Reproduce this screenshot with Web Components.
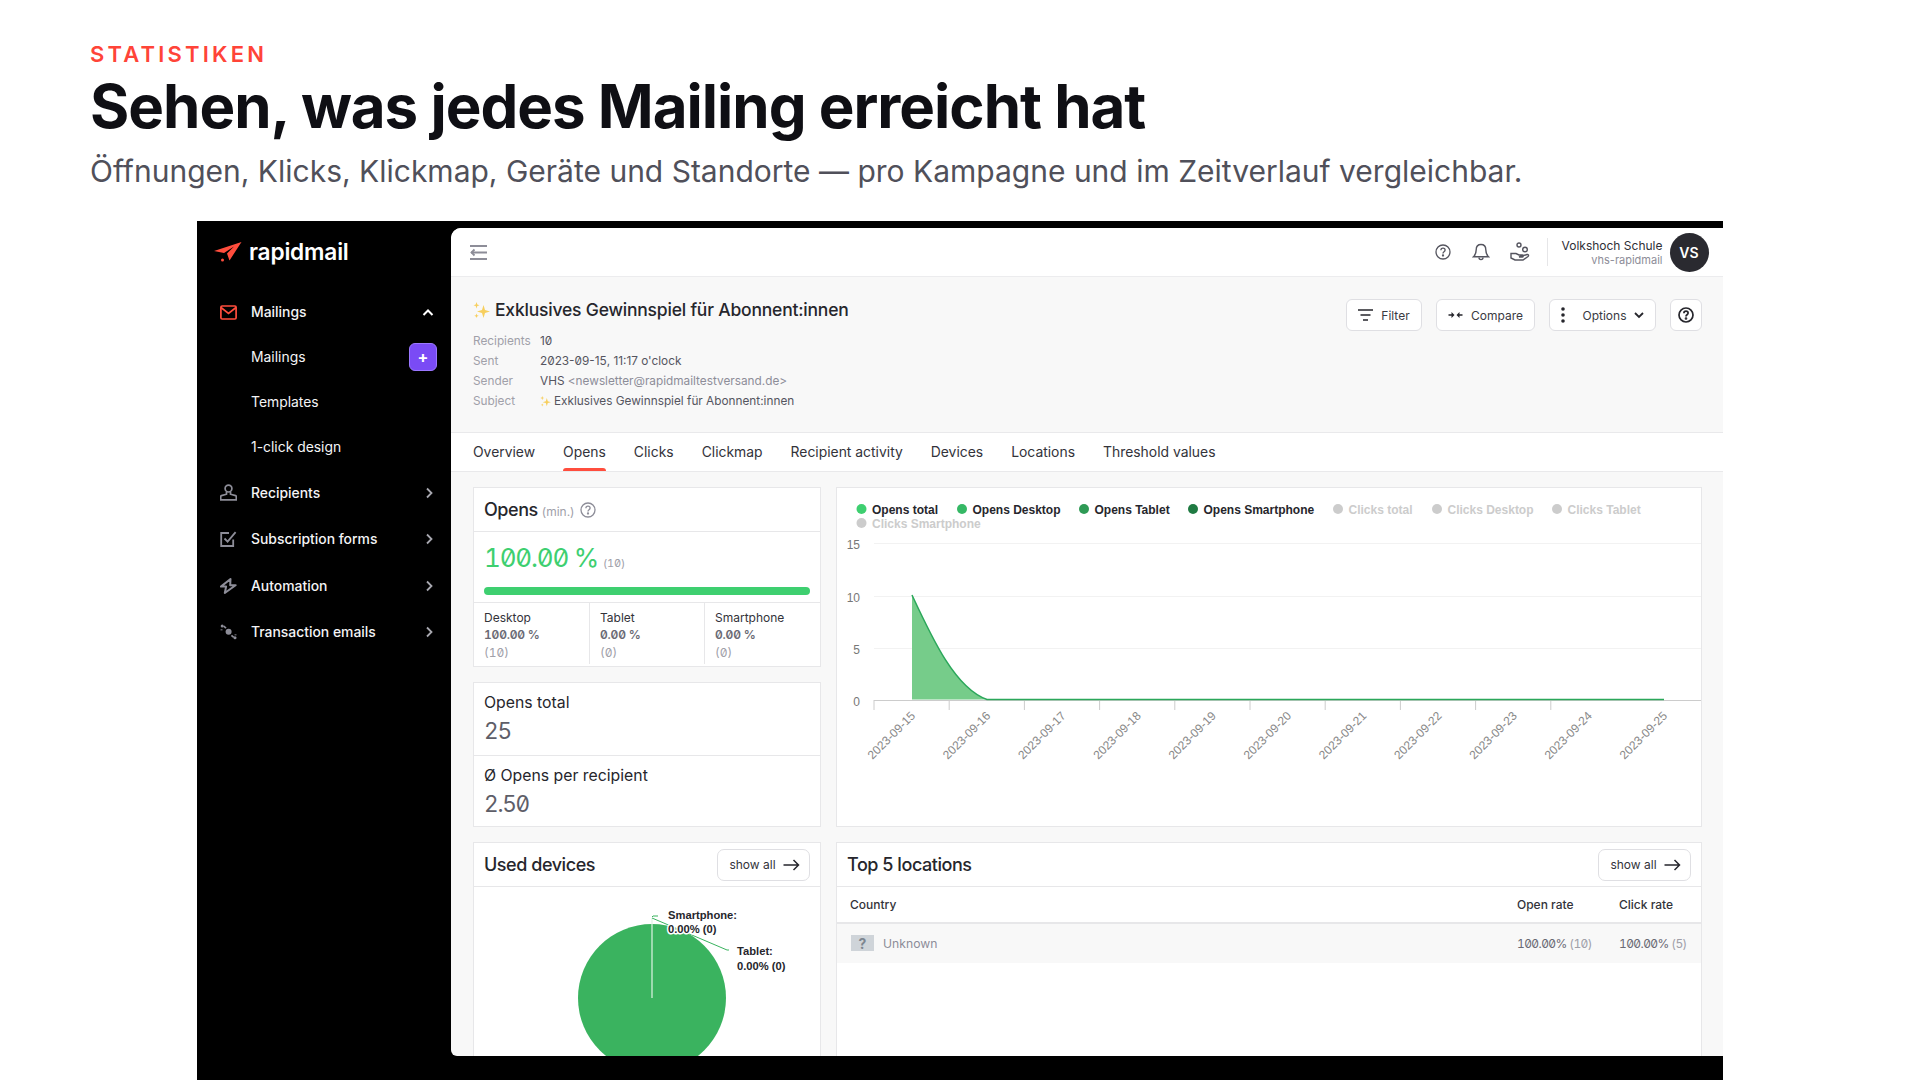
<!DOCTYPE html>
<html lang="de">
<head>
<meta charset="utf-8">
<title>Statistiken</title>
<style>
  html, body { margin: 0; height: 1080px; overflow: hidden; background: #fff; }
  body { font-family: Inter, "Noto Sans", sans-serif; color: #26262c; }
</style>
</head>
<body>
<stats-hero></stats-hero>
<app-frame></app-frame>

<script>
const ICONS = {
  mail: '<svg width="17" height="15" viewBox="0 0 17 15" fill="none" stroke="#ff4d3d" stroke-width="1.7"><rect x=".9" y="1" width="15.2" height="13" rx="1.2"/><path d="M1 2.5 8.5 8.5 16 2.5"/></svg>',
  person: '<svg width="17" height="17" viewBox="0 0 17 17" fill="none" stroke="#8d8d98" stroke-width="1.7"><circle cx="8.5" cy="4.6" r="3.4"/><path d="M6.5 8v2.2L1.4 11.6c-.5.2-.7.5-.7 1v3.2h15.6v-3.2c0-.5-.2-.8-.7-1l-5.1-1.4V8"/></svg>',
  check: '<svg width="17" height="16" viewBox="0 0 17 16" fill="none" stroke="#8d8d98" stroke-width="1.8"><path d="M9 2H1.2v13h12V8.5"/><path d="M4.5 7.5 7.6 10.6 15.6 1.2"/></svg>',
  bolt: '<svg width="17" height="16" viewBox="0 0 17 16" fill="none" stroke="#8d8d98" stroke-width="2" stroke-linejoin="round"><path d="M10.5 1 .9 8.6h5.2L4.8 15l10.8-7.8h-5.4z"/></svg>',
  swap: '<svg width="17" height="16" viewBox="0 0 17 16" fill="#8d8d98"><circle cx="8.6" cy="7.8" r="3"/><circle cx="2.2" cy="2" r="1.5"/><path d="M4.2 1.4 6.6 3.6 5.4 4.8 3 2.6z"/><circle cx="15" cy="13.8" r="1.5"/><path d="M12 10.8l2.4 2-1.2 1.3-2.4-2z"/><path d="M.5 5h2v1.5h-2zM14.5 10h2v1.4h-2z" opacity=".6"/></svg>',
  help: '<svg width="16" height="16" viewBox="0 0 16 16" fill="none" stroke="currentColor" stroke-width="1.3"><circle cx="8" cy="8" r="7"/><path d="M5.9 6.2c0-1.2.9-2 2.1-2s2.1.8 2.1 1.9c0 1.7-2.1 1.6-2.1 3.3"/><circle cx="8" cy="11.5" r=".5" fill="currentColor"/></svg>',
  arrow: '<svg width="17" height="12" viewBox="0 0 17 12" fill="none" stroke="#26262c" stroke-width="1.5"><path d="M.5 6h15M10.5 1l5 5-5 5"/></svg>',
  sparkle: '<svg width="17" height="17" viewBox="0 0 17 17" fill="#f7cf5e"><path d="M10.5 3 12 8l5 1.5L12 11l-1.5 5L9 11 4 9.5 9 8z"/><path d="M3.5 0l.8 2.4 2.2.8-2.2.8L3.5 6.4l-.8-2.4L.5 3.2l2.2-.8z"/><path d="M3.5 11.5l.6 1.7 1.6.6-1.6.6-.6 1.7-.6-1.7-1.6-.6 1.6-.6z"/></svg>'
};

class StatsHero extends HTMLElement {
  connectedCallback() {
    this.attachShadow({ mode: 'open' }).innerHTML = `
      <style>
        :host { display: block; height: 221px; box-sizing: border-box; padding: 41px 0 0 90px; }
        .eyebrow { font-size: 22px; line-height: 27px; font-weight: 600; letter-spacing: .145em; color: #ff4438; }
        h1 { margin: 2px 0 0; font-size: 60px; line-height: 72px; font-weight: 700; letter-spacing: -1px; color: #0f0f14; }
        p { margin: 10px 0 0; font-size: 30px; line-height: 38px; color: #50505a; }
      </style>
      <div class="eyebrow">STATISTIKEN</div>
      <h1>Sehen, was jedes Mailing erreicht hat</h1>
      <p>Öffnungen, Klicks, Klickmap, Geräte und Standorte — pro Kampagne und im Zeitverlauf vergleichbar.</p>`;
  }
}

class AppFrame extends HTMLElement {
  connectedCallback() {
    this.attachShadow({ mode: 'open' }).innerHTML = `
      <style>
        :host { display: flex; margin-left: 197px; width: 1526px; height: 859px; background: #000; box-sizing: border-box; padding: 7px 0 24px; }
        main { flex: 1; min-width: 0; background: #f8f8f8; border-radius: 10px 0 0 6px; overflow: hidden; }
        .content { padding: 15px 21px 0 22px; display: grid; grid-template-columns: 348px 866px; column-gap: 15px; row-gap: 15px; grid-template-rows: 340px auto; }
        .left { display: flex; flex-direction: column; gap: 15px; }
      </style>
      <side-bar></side-bar>
      <main>
        <top-bar></top-bar>
        <campaign-head></campaign-head>
        <tab-row></tab-row>
        <div class="content">
          <div class="left"><opens-card></opens-card><totals-card></totals-card></div>
          <opens-chart></opens-chart>
          <devices-card></devices-card>
          <locations-card></locations-card>
        </div>
      </main>`;
  }
}

class SideBar extends HTMLElement {
  connectedCallback() {
    const chev = '<svg slot="end" width="9" height="12" viewBox="0 0 9 12" fill="none" stroke="#a8a8b0" stroke-width="1.8"><path d="M2 1.5 6.5 6 2 10.5"/></svg>';
    this.attachShadow({ mode: 'open' }).innerHTML = `
      <style>
        :host { display: block; width: 254px; flex: none; background: #000; color: #fff; }
        .logo { display: flex; align-items: center; gap: 7px; height: 47px; padding-left: 17px; font-size: 22.7px; font-weight: 600; letter-spacing: -.2px; margin-bottom: 15px; }
        nav { display: flex; flex-direction: column; }
      </style>
      <div class="logo">
        <svg width="28" height="20" viewBox="0 0 28 20"><path fill="#ff4d3d" d="M0 9 27.5 0 15.5 18.5 13 11.5 20 4.5 10 11z"/><circle cx="8.5" cy="18" r="1.5" fill="#ff4d3d"/></svg>
        rapidmail
      </div>
      <nav>
        <nav-item strong h="44">${ICONS.mail.replace('<svg', '<svg slot="icon"')}Mailings<svg slot="end" width="12" height="9" viewBox="0 0 12 9" fill="none" stroke="#fff" stroke-width="2"><path d="M1.5 7 6 2.5 10.5 7"/></svg></nav-item>
        <nav-item h="45">Mailings<span slot="end" style="display:flex;align-items:center;justify-content:center;width:28px;height:28px;box-sizing:border-box;margin-right:-3px;border-radius:6px;background:#7a4bf5;border:1px solid #9b78ff;color:#fff;font-size:16px;font-weight:700">+</span></nav-item>
        <nav-item h="45">Templates</nav-item>
        <nav-item h="45">1-click design</nav-item>
        <nav-item strong h="47">${ICONS.person.replace('<svg', '<svg slot="icon"')}Recipients${chev}</nav-item>
        <nav-item strong h="46">${ICONS.check.replace('<svg', '<svg slot="icon"')}Subscription forms${chev}</nav-item>
        <nav-item strong h="47">${ICONS.bolt.replace('<svg', '<svg slot="icon"')}Automation${chev}</nav-item>
        <nav-item strong h="46">${ICONS.swap.replace('<svg', '<svg slot="icon"')}Transaction emails${chev}</nav-item>
      </nav>`;
  }
}

class NavItem extends HTMLElement {
  connectedCallback() {
    const weight = this.hasAttribute('strong') ? 500 : 400;
    this.attachShadow({ mode: 'open' }).innerHTML = `
      <style>
        :host { display: flex; align-items: center; height: ${this.getAttribute('h')}px; padding: 0 17px 0 23px; font-size: 13.9px; font-weight: ${weight}; color: #f4f4f6; }
        .icon { width: 31px; display: flex; flex: none; }
        .label { flex: 1; }
        .end { display: flex; align-items: center; }
      </style>
      <span class="icon"><slot name="icon"></slot></span>
      <span class="label"><slot></slot></span>
      <span class="end"><slot name="end"></slot></span>`;
  }
}

class TopBar extends HTMLElement {
  connectedCallback() {
    this.attachShadow({ mode: 'open' }).innerHTML = `
      <style>
        :host { display: flex; align-items: center; height: 49px; box-sizing: border-box; background: #fff; border-bottom: 1px solid #ececee; padding: 0 14.5px 0 19px; color: #55555f; }
        .spacer { flex: 1; }
        .icons { display: flex; align-items: center; gap: 20px; }
        .icons > svg:first-child { margin-right: 1px; }
        .sep { width: 1px; height: 28px; background: #e6e6e8; margin: 0 14px 0 17px; }
        .who { text-align: right; margin-right: 7px; }
        .name { font-size: 12px; line-height: 15px; color: #2f2f36; }
        .sub { font-size: 11px; line-height: 14px; color: #8d8d98; }
        .avatar { width: 39px; height: 39px; border-radius: 50%; background: #2a2a30; color: #fff; font-size: 14px; font-weight: 600; display: flex; align-items: center; justify-content: center; }
      </style>
      <svg width="17" height="17" viewBox="0 0 17 17" fill="none" stroke="#8d8d98" stroke-width="1.8"><path d="M0 2h17M0 8.5h17M0 15h17"/><path stroke="#fff" stroke-width="4" d="M0 8.5h1"/><path d="M4.5 5.5l-3 3 3 3"/></svg>
      <span class="spacer"></span>
      <span class="icons">
        ${ICONS.help}
        <svg width="18" height="19" viewBox="0 0 18 19" fill="none" stroke="#55555f" stroke-width="1.4"><path d="M9 1.5c-3.2 0-4.8 2.3-4.8 5.2 0 3.7-1.3 5.7-2.7 7.1h15c-1.4-1.4-2.7-3.4-2.7-7.1 0-2.9-1.6-5.2-4.8-5.2z"/><path d="M7 14.5c0 2.8 4 2.8 4 0"/></svg>
        <svg width="20" height="20" viewBox="0 0 20 20" fill="none" stroke="#55555f" stroke-width="1.4"><circle cx="9" cy="3" r="2"/><circle cx="15" cy="7.5" r="2.3"/><path d="M1 11.5h5l3 1.5h3.5c1 0 1 2 0 2H9l8-2.5c1.5-.3 2 1 1 2l-5 3.5H5l-4-2z"/></svg>
      </span>
      <span class="sep"></span>
      <div class="who"><div class="name">Volkshoch Schule</div><div class="sub">vhs-rapidmail</div></div>
      <div class="avatar">VS</div>`;
  }
}

class CampaignHead extends HTMLElement {
  connectedCallback() {
    this.attachShadow({ mode: 'open' }).innerHTML = `
      <style>
        :host { display: flex; height: 156px; box-sizing: border-box; border-bottom: 1px solid #e9e9eb; padding: 22px 21px 0 22px; align-items: flex-start; }
        .info { flex: 1; }
        h2 { display: flex; align-items: center; gap: 5px; margin: 0 0 10px; font-size: 17.5px; line-height: 22px; font-weight: 500; color: #26262c; letter-spacing: -.2px; }
        .meta { display: grid; grid-template-columns: 67px auto; grid-auto-rows: 20px; align-items: center; font-size: 11.8px; color: #a0a0a9; }
        .val { color: #55555f; display: flex; align-items: center; gap: 3px; }
        .num { font-feature-settings: "zero"; }
        .val em { font-style: normal; color: #8d8d98; }
        .actions { display: flex; gap: 14px; }
      </style>
      <div class="info">
        <h2>${ICONS.sparkle}Exklusives Gewinnspiel für Abonnent:innen</h2>
        <div class="meta">
          <span>Recipients</span><span class="val num">10</span>
          <span>Sent</span><span class="val"><span><span class="num">2023-09-15</span>, 11:17 o'clock</span></span>
          <span>Sender</span><span class="val"><span>VHS <em>&lt;newsletter@rapidmailtestversand.de&gt;</em></span></span>
          <span>Subject</span><span class="val">${ICONS.sparkle.replace('width="17" height="17"', 'width="11" height="11"')}Exklusives Gewinnspiel für Abonnent:innen</span>
        </div>
      </div>
      <div class="actions">
        <tool-button w="76"><svg width="15" height="12" viewBox="0 0 15 12" fill="none" stroke="#26262c" stroke-width="1.6"><path d="M0 1h15M2.5 6h10M5 11h5"/></svg>Filter</tool-button>
        <tool-button w="99"><svg width="15" height="8" viewBox="0 0 14 8" fill="#26262c"><path d="M0 3.3h3V1l3 3-3 3V4.700H0zM14 3.3h-3V1L8 4l3 3V4.700h3z"/></svg>Compare</tool-button>
        <tool-button w="107"><svg width="4" height="16" viewBox="0 0 4 16" fill="#26262c"><circle cx="2" cy="2" r="1.8"/><circle cx="2" cy="8" r="1.8"/><circle cx="2" cy="14" r="1.8"/></svg><span style="margin-left:10px">Options</span><svg width="10" height="7" viewBox="0 0 10 7" fill="none" stroke="#26262c" stroke-width="1.8"><path d="M1 1l4 4 4-4"/></svg></tool-button>
        <tool-button w="32" style="color:#26262c">${ICONS.help.replace('stroke-width="1.3"', 'stroke-width="1.7"')}</tool-button>
      </div>`;
  }
}

class ToolButton extends HTMLElement {
  connectedCallback() {
    this.attachShadow({ mode: 'open' }).innerHTML = `
      <style>
        :host { display: inline-flex; align-items: center; justify-content: center; gap: 8px; box-sizing: border-box; width: ${this.getAttribute('w')}px; height: 32px; background: #fff; border: 1px solid #dfdfe3; border-radius: 6px; font-size: 12px; color: #3a3a42; }
      </style>
      <slot></slot>`;
  }
}

class TabRow extends HTMLElement {
  connectedCallback() {
    const tabs = ['Overview', 'Opens', 'Clicks', 'Clickmap', 'Recipient activity', 'Devices', 'Locations', 'Threshold values'];
    this.attachShadow({ mode: 'open' }).innerHTML = `
      <style>
        :host { display: flex; gap: 28px; height: 39px; box-sizing: border-box; padding-left: 22px; background: #fff; border-bottom: 1px solid #e9e9eb; font-size: 13.9px; color: #33333a; }
        span { display: flex; align-items: center; height: 38px; box-sizing: border-box; padding-bottom: 1px; position: relative; }
        .active::after { content: ""; position: absolute; left: 0; right: 0; bottom: 0; height: 3px; background: #ff4d3d; border-radius: 3px 3px 0 0; }
      </style>
      ${tabs.map(t => `<span class="${t === 'Opens' ? 'active' : ''}">${t}</span>`).join('')}`;
  }
}

const CARD_CSS = `
  :host { display: block; box-sizing: border-box; background: #fff; border: 1px solid #e7e7e9; overflow: hidden; }
  .head { display: flex; align-items: center; height: 44px; box-sizing: border-box; border-bottom: 1px solid #e7e7e9; padding: 0 10px 0 10px; }
  .head h3 { margin: 0; font-size: 18px; font-weight: 500; letter-spacing: -.45px; color: #26262c; }
  .num { font-feature-settings: "zero", "tnum"; }
`;

class OpensCard extends HTMLElement {
  connectedCallback() {
    const cell = (label, pct, n) => `<div class="cell"><div>${label}</div><b class="num">${pct} %</b><small class="num">(${n})</small></div>`;
    this.attachShadow({ mode: 'open' }).innerHTML = `
      <style>${CARD_CSS}
        :host { height: 180px; }
        small.min { font-size: 12px; color: #a0a0a9; margin: 3px 5px 0 4px; }
        .head svg { color: #8d8d98; }
        .big { padding: 11px 10px 0; height: 71px; box-sizing: border-box; border-bottom: 1px solid #e7e7e9; }
        .rate { font-size: 26px; line-height: 30px; color: #3ecf70; letter-spacing: -1.2px; }
        .rate small { font-size: 11px; color: #a0a0a9; margin-left: -1px; letter-spacing: -.2px; }
        .bar { height: 8px; border-radius: 4px; background: #3ecf70; margin-top: 9px; }
        .cells { display: grid; grid-template-columns: 115px 115px 1fr; }
        .cell { padding: 7px 10px 0; height: 61px; box-sizing: border-box; font-size: 12px; line-height: 16.5px; color: #33333a; }
        .cell + .cell { border-left: 1px solid #e7e7e9; }
        .cell b { display: block; font-weight: 600; color: #6a6a74; letter-spacing: -.2px; }
        .cell small { display: block; font-size: 12px; color: #a0a0a9; line-height: 19px; }
      </style>
      <div class="head"><h3>Opens</h3><small class="min">(min.)</small>${ICONS.help}</div>
      <div class="big"><div class="rate num">100.00 % <small>(10)</small></div><div class="bar"></div></div>
      <div class="cells">${cell('Desktop', '100.00', 10)}${cell('Tablet', '0.00', 0)}${cell('Smartphone', '0.00', 0)}</div>`;
  }
}

class TotalsCard extends HTMLElement {
  connectedCallback() {
    this.attachShadow({ mode: 'open' }).innerHTML = `
      <style>${CARD_CSS}
        :host { height: 145px; }
        .row { height: 72px; box-sizing: border-box; padding: 11px 10px 0; font-size: 15.8px; line-height: 18px; color: #26262c; }
        .row + .row { border-top: 1px solid #e7e7e9; }
        .val { font-size: 22.5px; line-height: 27px; margin-top: 5px; color: #5e5e68; letter-spacing: -1.2px; }
      </style>
      <div class="row">Opens total<div class="val num">25</div></div>
      <div class="row">Ø Opens per recipient<div class="val num">2.50</div></div>`;
  }
}

class OpensChart extends HTMLElement {
  connectedCallback() {
    // card inner box starts at 837,488 on the screen; the numbers below are read off the reference
    const ORIGIN_X = 837, ORIGIN_Y = 488;
    const x = v => v - ORIGIN_X, y = v => v - ORIGIN_Y;
    const legend = [
      [861.5, 509, 'Opens total', '#3ecf70', '#26262c'],
      [962, 509, 'Opens Desktop', '#35b865', '#26262c'],
      [1084, 509, 'Opens Tablet', '#2e9a55', '#26262c'],
      [1193, 509, 'Opens Smartphone', '#1f7a42', '#26262c'],
      [1338, 509, 'Clicks total', '#ccc', '#ccc'],
      [1437, 509, 'Clicks Desktop', '#ccc', '#ccc'],
      [1557, 509, 'Clicks Tablet', '#ccc', '#ccc'],
      [861.5, 523, 'Clicks Smartphone', '#ccc', '#ccc'],
    ].map(([cx, cy, t, dot, fg]) => `<circle cx="${x(cx)}" cy="${y(cy)}" r="5" fill="${dot}"/><text x="${x(cx) + 10.5}" y="${y(cy) + 4.5}" font-weight="700" fill="${fg}">${t}</text>`).join('');
    const grid = [[543, 15], [596, 10], [648, 5]].map(([v, l]) => `<path d="M${x(874)} ${y(v) + .5}H866" stroke="#f2f2f2"/><text x="${x(860)}" y="${y(v) + 6}" text-anchor="end" fill="#777">${l}</text>`).join('');
    let ticks = '';
    for (let i = 0; i <= 10; i++) {
      const tx = 874 + 75.2 * i, lx = 912 + 75.2 * i;
      if (i < 10) ticks += `<path d="M${x(tx).toFixed(1)} ${y(700)}v10" stroke="#ccc"/>`;
      ticks += `<text transform="translate(${x(lx + 4).toFixed(1)} ${y(716.5)}) rotate(-45)" text-anchor="end" fill="#888">2023-09-${15 + i}</text>`;
    }
    this.attachShadow({ mode: 'open' }).innerHTML = `
      <style>${CARD_CSS}
        :host { height: 340px; }
        svg { display: block; font-family: "Liberation Sans", Arial, sans-serif; font-size: 12px; }
      </style>
      <svg width="866" height="340">
        ${legend}
        ${grid}
        <text x="${x(860)}" y="${y(706)}" text-anchor="end" fill="#777">0</text>
        <path d="M${x(874)} ${y(700.5)}H866" stroke="#ccc"/>
        ${ticks}
        <path d="M${x(912)} ${y(595)}C${x(932)} ${y(638)} ${x(955)} ${y(688)} ${x(987)} ${y(699.5)}H${x(912)}Z" fill="#76cc8a"/>
        <path d="M${x(912)} ${y(595)}C${x(932)} ${y(638)} ${x(955)} ${y(688)} ${x(987)} ${y(699.5)}H${x(1664)}" fill="none" stroke="#2ba75a" stroke-width="1.5"/>
      </svg>`;
  }
}

class DevicesCard extends HTMLElement {
  connectedCallback() {
    this.attachShadow({ mode: 'open' }).innerHTML = `
      <style>${CARD_CSS}
        :host { height: 230px; }
        .head { justify-content: space-between; }
        svg { display: block; font-family: "Liberation Sans", Arial, sans-serif; font-size: 11.2px; font-weight: 700; }
      </style>
      <div class="head"><h3>Used devices</h3><show-all></show-all></div>
      <svg width="346" height="186">
        <circle cx="178" cy="111" r="74" fill="#3ab35f"/>
        <path d="M178 111V31" stroke="#dff3e5" stroke-width="1.2"/>
        <path d="M178 30l1-1h5M178 31l75 32h2" stroke="#3ab35f" fill="none"/>
        <g fill="#26262c" paint-order="stroke" stroke="#fff" stroke-width="3" stroke-linejoin="round">
          <text x="194" y="32">Smartphone:</text><text x="194" y="46">0.00% (0)</text>
          <text x="263" y="68">Tablet:</text><text x="263" y="83">0.00% (0)</text>
        </g>
      </svg>`;
  }
}

class LocationsCard extends HTMLElement {
  connectedCallback() {
    this.attachShadow({ mode: 'open' }).innerHTML = `
      <style>${CARD_CSS}
        :host { height: 230px; }
        .head { justify-content: space-between; }
        .cols { display: grid; grid-template-columns: 1fr 102px 82px; padding-left: 13px; align-items: center; font-size: 12px; }
        .th { height: 35px; border-bottom: 2px solid #e7e7e9; font-weight: 500; color: #33333a; }
        .tr { height: 39px; box-sizing: border-box; padding-bottom: 1px; background: #f8f8f8; color: #6a6a74; }
        .tr .num { letter-spacing: -.6px; }
        .country { display: flex; align-items: center; gap: 9px; color: #8d8d98; font-size: 12.2px; }
        .flag { width: 23px; height: 16px; margin-left: 1px; background: #cfd4d9; color: #7d8690; font-size: 14px; font-weight: 700; display: flex; align-items: center; justify-content: center; }
        .tr small { font-size: 12px; color: #a0a0a9; }
      </style>
      <div class="head"><h3>Top 5 locations</h3><show-all></show-all></div>
      <div class="cols th"><span>Country</span><span>Open rate</span><span>Click rate</span></div>
      <div class="cols tr"><span class="country"><span class="flag">?</span>Unknown</span><span class="num">100.00% <small>(10)</small></span><span class="num">100.00% <small>(5)</small></span></div>`;
  }
}

class ShowAll extends HTMLElement {
  connectedCallback() {
    this.attachShadow({ mode: 'open' }).innerHTML = `
      <style>
        :host { display: inline-flex; align-items: center; justify-content: center; gap: 7px; box-sizing: border-box; width: 93px; height: 32px; padding-left: 2px; background: #fff; border: 1px solid #dfdfe3; border-radius: 7px; font-size: 12px; color: #33333a; }
      </style>
      show all${ICONS.arrow}`;
  }
}

customElements.define('stats-hero', StatsHero);
customElements.define('side-bar', SideBar);
customElements.define('nav-item', NavItem);
customElements.define('top-bar', TopBar);
customElements.define('campaign-head', CampaignHead);
customElements.define('tool-button', ToolButton);
customElements.define('tab-row', TabRow);
customElements.define('opens-card', OpensCard);
customElements.define('totals-card', TotalsCard);
customElements.define('opens-chart', OpensChart);
customElements.define('devices-card', DevicesCard);
customElements.define('locations-card', LocationsCard);
customElements.define('show-all', ShowAll);
customElements.define('app-frame', AppFrame);
</script>
</body>
</html>
